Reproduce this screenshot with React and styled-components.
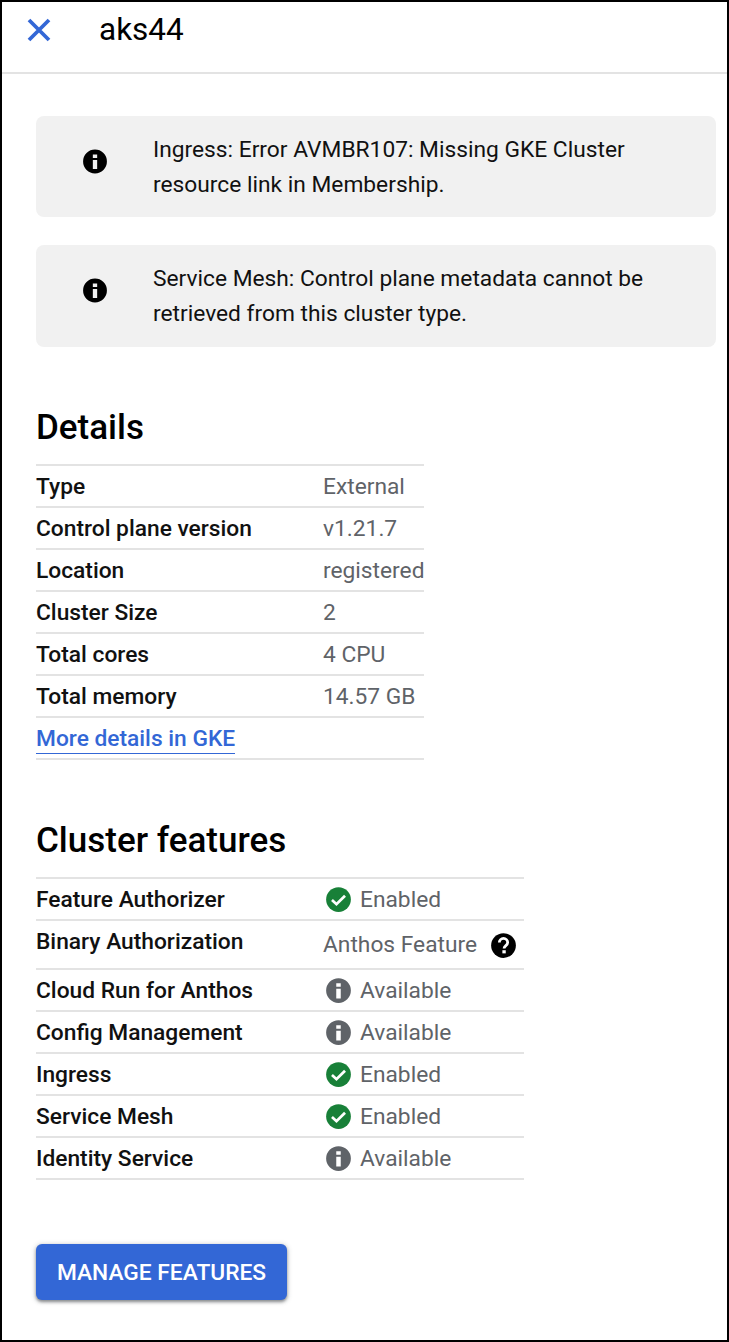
import React from "react";
import styled, { createGlobalStyle } from "styled-components";

const Global = createGlobalStyle`
  html, body { margin: 0; padding: 0; background: #fff; }
  * { box-sizing: border-box; }
  body { font-family: Roboto, "Liberation Sans", sans-serif; }
`;

const Frame = styled.div`
  width: 729px;
  height: 1342px;
  border: 2px solid #000;
  background: #fff;
  overflow: hidden;
`;
const Header = styled.header`
  height: 72px;
  border-bottom: 2px solid #e3e3e3;
  display: flex;
  align-items: center;
  padding: 0 0 14px 24px;
`;
const CloseBtn = styled.button`
  width: 26px;
  height: 26px;
  padding: 0;
  border: 0;
  background: none;
  display: flex;
  margin-right: 47px;
`;
const Title = styled.h1`
  margin: 0;
  font-size: 31.5px;
  font-weight: 400;
  color: #000;
  line-height: 36px;
`;
const Body = styled.main`
  padding: 42px 11px 0 34px;
`;
const Notice = styled.div`
  display: flex;
  align-items: center;
  height: ${(p) => p.$height}px;
  border-radius: 8px;
  background: #f1f1f1;
  margin-bottom: 28px;
  padding-left: 46px;
  font-size: 22.75px;
  line-height: 35px;
  color: #111;
`;
const NoticeIcon = styled.span`
  display: flex;
  width: 26px;
  margin-right: 45px;
  margin-bottom: 11px;
`;
const NoticeText = styled.div`
  padding-top: ${(p) => p.$nudge}px;
`;
const Heading = styled.h2`
  margin: 0;
  font-size: 35px;
  font-weight: 500;
  line-height: 40px;
  color: #000;
`;
const DetailsHeading = styled(Heading)`
  margin-top: 61px;
  margin-bottom: 16px;
`;
const FeaturesHeading = styled(Heading)`
  margin-top: 61px;
  margin-bottom: 16px;
`;
const Table = styled.div`
  width: ${(p) => p.$width}px;
  border-top: 2px solid #e3e3e3;
`;
const Row = styled.div`
  display: flex;
  align-items: ${(p) => (p.$tall ? "flex-start" : "center")};
  height: ${(p) => (p.$tall ? 49 : 42)}px;
  border-bottom: 2px solid #e3e3e3;
  font-size: 22.75px;
  white-space: nowrap;
`;
const Label = styled.div`
  width: 287px;
  flex: none;
  font-weight: 500;
  color: #111;
  line-height: 40px;
  padding-top: 1px;
`;
const Value = styled.div`
  color: #5f6368;
  line-height: 40px;
  padding-top: 1px;
`;
const TallValue = styled(Value)`
  display: flex;
  align-items: center;
  height: 47px;
`;
const StatusCell = styled.div`
  display: flex;
  align-items: center;
  gap: 8px;
  color: #5f6368;
  padding-left: 2px;
  line-height: 40px;
  padding-top: 1px;
`;
const HelpIcon = styled.span`
  display: flex;
  margin-left: 13px;
`;
const MoreLink = styled.a`
  color: #3367d6;
  font-weight: 500;
  text-decoration: none;
  border-bottom: 1px solid #3367d6;
  line-height: 29px;
  height: 30px;
  margin-top: 2px;
`;
const ManageButton = styled.button`
  display: block;
  margin-top: 64px;
  width: 251px;
  height: 56px;
  border: 0;
  border-radius: 6px;
  background: #3367d6;
  color: #fff;
  font-family: inherit;
  font-size: 22.75px;
  font-weight: 500;
  padding: 0;
  box-shadow: 0 2px 3px rgba(60,64,67,.5), 0 1px 5px 1px rgba(60,64,67,.22);
`;

const Close = () => (
  <svg width="26" height="26" viewBox="0 0 26 26">
    <path d="M3 3 L23 23 M23 3 L3 23" stroke="#3367d6" strokeWidth="3.8" fill="none" />
  </svg>
);
const Info = ({ color = "#000", size = 27 }) => (
  <svg width={size} height={size} viewBox="0 0 24 24">
    <path fill={color} fillRule="evenodd" d="M12 1a11 11 0 1 0 0 22 11 11 0 0 0 0-22zM10 10.5h4V19h-4zM10 5.5h4v3.2h-4z" />
  </svg>
);
const Check = () => (
  <svg width="27" height="27" viewBox="0 0 24 24">
    <circle cx="12" cy="12" r="11" fill="#188038" />
    <path d="M6.2 12.4 L10.2 16.2 L17.8 8.6" stroke="#fff" strokeWidth="2.4" fill="none" />
  </svg>
);
const Help = () => (
  <svg width="27" height="27" viewBox="0 0 24 24">
    <circle cx="12" cy="12" r="11" fill="#000" />
    <path d="M8.3 9.4a3.7 3.7 0 0 1 7.4 0c0 2.6-3.2 2.7-3.2 5.2" stroke="#fff" strokeWidth="2.5" fill="none" />
    <rect x="11" y="16.2" width="3" height="2.8" fill="#fff" />
  </svg>
);

const details = [
  ["Type", "External"],
  ["Control plane version", "v1.21.7"],
  ["Location", "registered"],
  ["Cluster Size", "2"],
  ["Total cores", "4 CPU"],
  ["Total memory", "14.57 GB"],
];

const Status = ({ kind }) => (
  <StatusCell>
    {kind === "Enabled" ? <Check /> : <Info color="#5f6368" />}
    {kind}
  </StatusCell>
);

export default function App() {
  return (
    <Frame>
      <Global />
      <Header>
        <CloseBtn aria-label="Close"><Close /></CloseBtn>
        <Title>aks44</Title>
      </Header>
      <Body>
        <Notice $height={101}>
          <NoticeIcon><Info /></NoticeIcon>
          <NoticeText $nudge={1}>Ingress: Error AVMBR107: Missing GKE Cluster<br />resource link in Membership.</NoticeText>
        </Notice>
        <Notice $height={102}>
          <NoticeIcon><Info /></NoticeIcon>
          <NoticeText $nudge={0}>Service Mesh: Control plane metadata cannot be<br />retrieved from this cluster type.</NoticeText>
        </Notice>
        <DetailsHeading>Details</DetailsHeading>
        <Table $width={388}>
          {details.map(([k, v]) => (
            <Row key={k}><Label>{k}</Label><Value>{v}</Value></Row>
          ))}
          <Row><MoreLink href="#">More details in GKE</MoreLink></Row>
        </Table>
        <FeaturesHeading>Cluster features</FeaturesHeading>
        <Table $width={488}>
          <Row><Label>Feature Authorizer</Label><Status kind="Enabled" /></Row>
          <Row $tall>
            <Label>Binary Authorization</Label>
            <TallValue>Anthos Feature<HelpIcon><Help /></HelpIcon></TallValue>
          </Row>
          <Row><Label>Cloud Run for Anthos</Label><Status kind="Available" /></Row>
          <Row><Label>Config Management</Label><Status kind="Available" /></Row>
          <Row><Label>Ingress</Label><Status kind="Enabled" /></Row>
          <Row><Label>Service Mesh</Label><Status kind="Enabled" /></Row>
          <Row><Label>Identity Service</Label><Status kind="Available" /></Row>
        </Table>
        <ManageButton>MANAGE FEATURES</ManageButton>
      </Body>
    </Frame>
  );
}
